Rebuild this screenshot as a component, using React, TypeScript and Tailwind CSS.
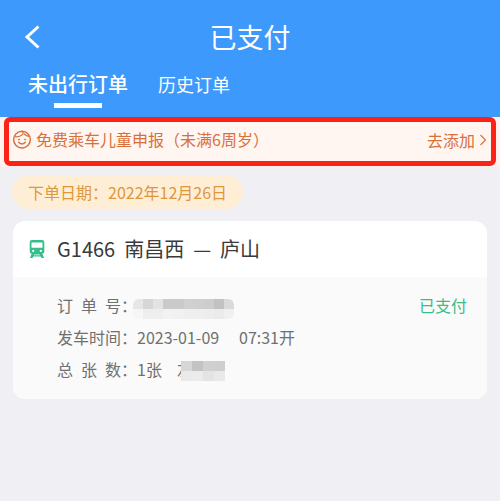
import { useState, type ReactNode } from 'react'

const TABS = ['未出行订单', '历史订单']

function BackIcon() {
  return (
    <svg viewBox="0 0 16 24" className="h-6 w-4" fill="none" stroke="currentColor" strokeWidth="3">
      <path d="M14.5 1.5 3 12l11.5 10.5" />
    </svg>
  )
}

function ChildIcon() {
  return (
    <svg viewBox="0 0 20 20" className="h-5 w-5" fill="none" stroke="currentColor" strokeWidth="1.5" strokeLinecap="round">
      <circle cx="10" cy="10.6" r="8.4" />
      <path d="M9.8 2.4c1.6.6 1.6 2.2.6 3.2-1.6 1.6-4.4 2.4-7.2 2.2M12.4 5c1.2 1.4 2.8 2.2 4.6 2.4" strokeWidth="1.2" />
      <path d="M6.6 13.2c1.5 2.3 5.3 2.3 6.8 0" />
      <circle cx="7" cy="10.5" r=".6" fill="currentColor" strokeWidth=".7" />
      <circle cx="13" cy="10.5" r=".6" fill="currentColor" strokeWidth=".7" />
    </svg>
  )
}

function TrainIcon() {
  return (
    <svg viewBox="0 0 16 18" className="h-[18px] w-4" fill="currentColor">
      <path
        fillRule="evenodd"
        d="M3 0h10a2.3 2.3 0 0 1 2.3 2.3v9.2A2.3 2.3 0 0 1 13 13.8H3A2.3 2.3 0 0 1 .7 11.5V2.3A2.3 2.3 0 0 1 3 0Zm-.5 2.4v5.4h11V2.4h-11ZM4.2 9.8a1.1 1.1 0 1 0 0 2.2 1.1 1.1 0 0 0 0-2.2Zm7.6 0a1.1 1.1 0 1 0 0 2.2 1.1 1.1 0 0 0 0-2.2Z"
      />
      <path fillRule="evenodd" d="M3 13 .9 18h2.6l.8-1.6h7.4l.8 1.6h2.6L13 13H3Zm2.2 1.6h5.6l.3.6H4.9l.3-.6Z" />
    </svg>
  )
}

// pixelated cover for private details, one colour per tile
function Mosaic({ rows, className }: { rows: string[][]; className: string }) {
  return (
    <svg
      viewBox={`0 0 ${rows[0].length} ${rows.length}`}
      preserveAspectRatio="none"
      shapeRendering="crispEdges"
      className={className}
      aria-hidden="true"
    >
      {rows.map((row, y) =>
        row.map((fill, x) => <rect key={`${x}-${y}`} x={x} y={y} width="1" height="1" fill={fill} />),
      )}
    </svg>
  )
}

const ORDER_NO_TILES = [
  ['#e6e6e6', '#d6d6d6', '#e3e3e3', '#cacaca', '#cacaca', '#d0d0d0', '#cfcfcf', '#cdcdcd', '#c2c2c2', '#dadada'],
  ['#f6f6f6', '#eeeeee', '#eeeeee', '#f2f2f2', '#f1f1f1', '#efefef', '#eeeeee', '#ededed', '#ebebeb', '#f0f0f0'],
]

const PASSENGER_TILES = [
  ['#d6d6d6', '#c3c3c3', '#d0d0d0', '#cfcfcf'],
  ['#eaeaea', '#ebebeb', '#e4e4e4', '#e9e9e9'],
]

function DetailRow({ label, children }: { label: string; children: ReactNode }) {
  return (
    <div className="flex items-center">
      <dt className="flex">
        <span className="flex w-16 justify-between">
          {label.split('').map((char) => (
            <span key={char}>{char}</span>
          ))}
        </span>
        ：
      </dt>
      <dd className="flex flex-1 items-center">{children}</dd>
    </div>
  )
}

export default function App() {
  const [active, setActive] = useState(TABS[0])

  return (
    <div className="min-h-screen bg-[#efeff4] font-['Noto_Sans_CJK_SC',sans-serif] text-base">
      <header className="bg-[#3d99fc] text-white">
        <div className="grid h-[68px] grid-cols-[48px_1fr_48px] items-center pt-1.5">
          <button type="button" aria-label="返回" className="flex justify-end pr-2">
            <BackIcon />
          </button>
          <h1 className="text-center text-[27px] leading-8">已支付</h1>
        </div>
        <nav className="flex h-[50px] items-start gap-[30px] px-7">
          {TABS.map((tab) => (
            <button
              key={tab}
              type="button"
              onClick={() => setActive(tab)}
              className={`flex flex-col items-center gap-[3px] leading-8 ${active === tab ? 'text-[20px] font-medium' : 'text-[18px]'}`}
            >
              {tab}
              {active === tab && <span className="h-[5px] w-12 bg-white" />}
            </button>
          ))}
        </nav>
      </header>

      <main>
        <section className="bg-[#fff1ee] px-1 pb-px">
          <div className="-mt-px flex h-[49px] items-center justify-between rounded-md border-[5px] border-[#fb2318] bg-[#fff6f2] pr-1 pl-[3px] text-[#d9703c]">
            <p className="flex items-center gap-1 pb-1.5">
              <ChildIcon />
              免费乘车儿童申报（未满6周岁）
            </p>
            <a href="#add" className="flex items-center gap-1 pb-1">
              去添加
              <svg viewBox="0 0 8 12" className="h-3 w-2" fill="none" stroke="currentColor" strokeWidth="1.2">
                <path d="m1.5 1 5 5-5 5" />
              </svg>
            </a>
          </div>
        </section>

        <div className="flex px-3 pt-2">
          <p className="rounded-full bg-[#feeed6] px-4 text-[#de973c] leading-[34px]">
            下单日期：2022年12月26日
          </p>
        </div>

        <article className="mx-[13px] mt-3 overflow-hidden rounded-xl bg-white">
          <div className="flex h-14 items-center pl-4 text-[#36bd8d]">
            <TrainIcon />
            <h2 className="ml-3 flex items-center gap-[9px] text-[20px] text-[#3a3a3a]">
              <span>G1466</span>
              <span>南昌西</span>
              <span>—</span>
              <span>庐山</span>
            </h2>
          </div>
          <dl className="bg-[#fafafa] pt-3 pr-5 pb-[14px] pl-11 leading-8 text-[#707070]">
            <DetailRow label="订单号">
              <Mosaic rows={ORDER_NO_TILES} className="mt-2 -ml-1 h-5 w-[101px] rounded-md" />
              <span className="ml-auto text-[#3cbc86]">已支付</span>
            </DetailRow>
            <DetailRow label="发车时间">
              <time dateTime="2023-01-09T07:31" className="flex">
                <span className="w-[102px]">2023-01-09</span>
                <span>07:31开</span>
              </time>
            </DetailRow>
            <DetailRow label="总张数">
              <span className="w-10">1张</span>
              <span className="relative flex w-12 items-center">
                左
                <Mosaic rows={PASSENGER_TILES} className="absolute top-2 left-1 h-5 w-11" />
              </span>
            </DetailRow>
          </dl>
        </article>
      </main>
    </div>
  )
}
